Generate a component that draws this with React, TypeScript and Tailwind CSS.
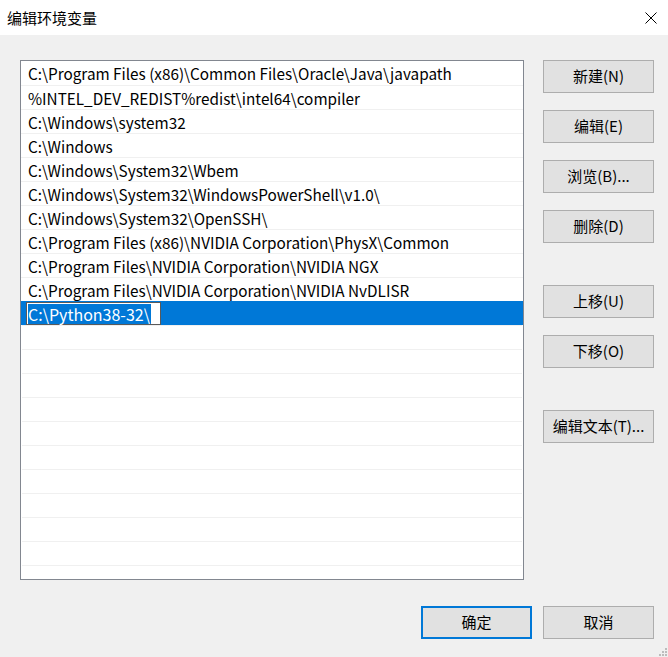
import React from "react";

const paths = [
  "C:\\Program Files (x86)\\Common Files\\Oracle\\Java\\javapath",
  "%INTEL_DEV_REDIST%redist\\intel64\\compiler",
  "C:\\Windows\\system32",
  "C:\\Windows",
  "C:\\Windows\\System32\\Wbem",
  "C:\\Windows\\System32\\WindowsPowerShell\\v1.0\\",
  "C:\\Windows\\System32\\OpenSSH\\",
  "C:\\Program Files (x86)\\NVIDIA Corporation\\PhysX\\Common",
  "C:\\Program Files\\NVIDIA Corporation\\NVIDIA NGX",
  "C:\\Program Files\\NVIDIA Corporation\\NVIDIA NvDLISR",
];

const font = { fontFamily: '"Noto Sans CJK SC", "Noto Sans", sans-serif' };

function Btn({
  children,
  primary = false,
  className = "",
}: {
  children: React.ReactNode;
  primary?: boolean;
  className?: string;
}) {
  return (
    <div
      className={
        "w-[111px] h-[33px] bg-[#e1e1e1] flex items-center justify-center text-[15px] text-black " +
        (primary ? "border-2 border-[#0078d7] " : "border border-[#adadad] ") +
        className
      }
    >
      {children}
    </div>
  );
}

export default function App() {
  const emptyRows = Array.from({ length: 11 });
  return (
    <div
      className="relative w-[668px] h-[657px] bg-[#f0f0f0] overflow-hidden text-black"
      style={font}
    >
      <div className="h-[35px] bg-white flex items-center justify-between pl-[7px] pr-[10px]">
        <span className="text-[15px] leading-none">编辑环境变量</span>
        <svg width="12" height="12" viewBox="0 0 12 12" className="mr-[1px]">
          <path d="M0.5 0.5 L11.5 11.5 M11.5 0.5 L0.5 11.5" stroke="#000" strokeWidth="1" fill="none" />
        </svg>
      </div>

      <div className="flex pt-[25px] pl-[20px]">
        <div className="w-[504px] h-[520px] bg-white border border-[#828790] overflow-hidden">
          {paths.map((p, i) => (
            <div
              key={i}
              className={
                "h-[24px] flex items-center pl-[7px] pt-[1px] text-[15.3px] whitespace-nowrap " +
                (i > 0 ? "border-t border-[#f0f0f0]" : "")
              }
            >
              {p}
            </div>
          ))}
          <div className="h-[24px] bg-[#0078d7] flex items-stretch pl-[5px] border-t border-[#0078d7]">
            <div className="w-[135px] bg-white border border-[#5a5a5a] flex items-center pl-[1px]">
              <span className="bg-[#0078d7] text-white text-[16px] h-[20px] flex items-center pr-[1px]">
                C:\Python38-32\
              </span>
            </div>
          </div>
          {emptyRows.map((_, i) => (
            <div key={i} className="h-[24px] border-t border-[#f0f0f0] mx-[1px]" />
          ))}
        </div>

        <div className="ml-[19px] flex flex-col">
          <Btn>新建(N)</Btn>
          <Btn className="mt-[17px]">编辑(E)</Btn>
          <Btn className="mt-[17px]">浏览(B)...</Btn>
          <Btn className="mt-[17px]">删除(D)</Btn>
          <Btn className="mt-[42px]">上移(U)</Btn>
          <Btn className="mt-[17px]">下移(O)</Btn>
          <Btn className="mt-[42px]">编辑文本(T)...</Btn>
        </div>
      </div>

      <div className="flex justify-end gap-[11px] pr-[14px] mt-[26px]">
        <Btn primary>确定</Btn>
        <Btn>取消</Btn>
      </div>

      <div className="absolute right-0 bottom-0 w-[12px] h-[12px]">
        <span className="absolute right-[1px] bottom-[1px] w-[2px] h-[2px] bg-[#bcbcbc]" />
        <span className="absolute right-[4px] bottom-[1px] w-[2px] h-[2px] bg-[#bcbcbc]" />
        <span className="absolute right-[7px] bottom-[1px] w-[2px] h-[2px] bg-[#bcbcbc]" />
        <span className="absolute right-[1px] bottom-[4px] w-[2px] h-[2px] bg-[#bcbcbc]" />
        <span className="absolute right-[4px] bottom-[4px] w-[2px] h-[2px] bg-[#bcbcbc]" />
        <span className="absolute right-[1px] bottom-[7px] w-[2px] h-[2px] bg-[#bcbcbc]" />
      </div>
    </div>
  );
}
